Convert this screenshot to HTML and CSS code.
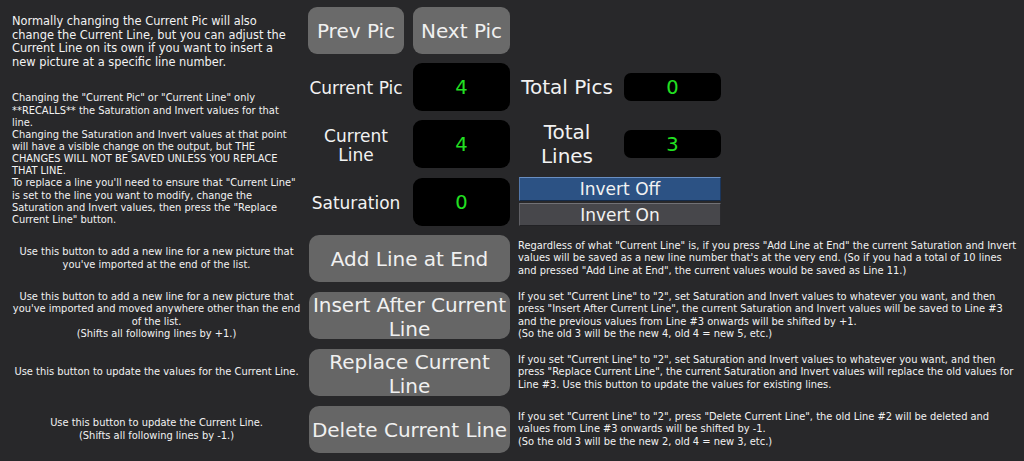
FILE: index.html
```html
<!DOCTYPE html>
<html lang="en">
<head>
<meta charset="utf-8">
<title>Line Editor</title>
<link rel="stylesheet" href="styles.css">
</head>
<body>
<div class="page">
  <section class="top">
    <div class="intro">
      <p class="lead">Normally changing the Current Pic will also<br>change the Current Line, but you can adjust the<br>Current Line on its own if you want to insert a<br>new picture at a specific line number.</p>
      <p class="note">Changing the "Current Pic" or "Current Line" only<br>**RECALLS** the Saturation and Invert values for that<br>line.<br>Changing the Saturation and Invert values at that point<br>will have a visible change on the output, but THE<br>CHANGES WILL NOT BE SAVED UNLESS YOU REPLACE<br>THAT LINE.<br>To replace a line you'll need to ensure that "Current Line"<br>is set to the line you want to modify, change the<br>Saturation and Invert values, then press the "Replace<br>Current Line" button.</p>
    </div>
    <div class="controls">
      <button class="btn nav">Prev Pic</button>
      <button class="btn nav">Next Pic</button>
      <div class="spacer"></div>

      <div class="label">Current Pic</div>
      <div class="display">4</div>
      <div class="label big">Total Pics</div>
      <div class="display slim">0</div>

      <div class="label">Current<br>Line</div>
      <div class="display">4</div>
      <div class="label big">Total<br>Lines</div>
      <div class="display slim">3</div>

      <div class="label">Saturation</div>
      <div class="display">0</div>
      <div class="toggle">
        <button class="tbtn on">Invert Off</button>
        <button class="tbtn off">Invert On</button>
      </div>
    </div>
  </section>

  <section class="actions">
    <p class="hint">Use this button to add a new line for a new picture that<br>you've imported at the end of the list.</p>
    <button class="btn action">Add Line at End</button>
    <p class="detail">Regardless of what "Current Line" is, if you press "Add Line at End" the current Saturation and Invert<br>values will be saved as a new line number that's at the very end. (So if you had a total of 10 lines<br>and pressed "Add Line at End", the current values would be saved as Line 11.)</p>

    <p class="hint">Use this button to add a new line for a new picture that<br>you've imported and moved anywhere other than the end<br>of the list.<br>(Shifts all following lines by +1.)</p>
    <button class="btn action">Insert After Current<br>Line</button>
    <p class="detail">If you set "Current Line" to "2", set Saturation and Invert values to whatever you want, and then<br>press "Insert After Current Line", the current Saturation and Invert values will be saved to Line #3<br>and the previous values from Line #3 onwards will be shifted by +1.<br>(So the old 3 will be the new 4, old 4 = new 5, etc.)</p>

    <p class="hint">Use this button to update the values for the Current Line.</p>
    <button class="btn action">Replace Current<br>Line</button>
    <p class="detail">If you set "Current Line" to "2", set Saturation and Invert values to whatever you want, and then<br>press "Replace Current Line", the current Saturation and Invert values will replace the old values for<br>Line #3. Use this button to update the values for existing lines.</p>

    <p class="hint">Use this button to update the Current Line.<br>(Shifts all following lines by -1.)</p>
    <button class="btn action">Delete Current Line</button>
    <p class="detail">If you set "Current Line" to "2", press "Delete Current Line", the old Line #2 will be deleted and<br>values from Line #3 onwards will be shifted by -1.<br>(So the old 3 will be the new 2, old 4 = new 3, etc.)</p>
  </section>
</div>
</body>
</html>
```

FILE: styles.css
```css
* { box-sizing: border-box; }
html, body {
  margin: 0;
  padding: 0;
  background: #28282a;
}
body {
  width: 1024px;
  height: 461px;
  overflow: hidden;
  color: #f2f2f2;
  font-family: "DejaVu Sans", Verdana, sans-serif;
}
p { margin: 0; }
button {
  font-family: inherit;
  color: inherit;
  border: 0;
  margin: 0;
  padding: 0;
  cursor: pointer;
}
.page {
  padding-top: 7px;
  display: flex;
  flex-direction: column;
  gap: 9px;
}
.top {
  display: grid;
  grid-template-columns: 308px auto;
  height: 219px;
}
.intro {
  padding: 8px 0 0 12px;
}
.lead {
  font-size: 11.4px;
  line-height: 13.6px;
}
.note {
  margin-top: 23px;
  font-size: 9.9px;
  line-height: 12.15px;
}
.controls {
  display: grid;
  grid-template-columns: 96px 97px 96px 97px;
  grid-template-rows: 47px 48px 48px 49px;
  column-gap: 9px;
  row-gap: 9px;
  align-items: center;
}
.spacer { grid-column: 3 / 5; }
.btn {
  background: #6a6a6a;
  border-radius: 9px;
  color: #f0f0f0;
  font-size: 20px;
  line-height: 23.5px;
  height: 100%;
  width: 100%;
  padding-top: 2px;
}
.label {
  font-size: 17px;
  line-height: 19.5px;
  text-align: center;
  padding-top: 4px;
}
.label.big {
  font-size: 20px;
  line-height: 23.5px;
  padding-top: 1px;
}
.display {
  background: #000;
  border-radius: 9px;
  height: 48px;
  color: #22e022;
  font-size: 19.5px;
  display: flex;
  align-items: center;
  justify-content: center;
  padding-top: 1px;
}
.display.slim {
  height: 28px;
  border-radius: 7px;
}
.toggle {
  grid-column: 3 / 5;
  display: flex;
  flex-direction: column;
  gap: 2px;
  height: 100%;
}
.tbtn {
  font-size: 17px;
  line-height: 18px;
  flex: 1;
  width: 100%;
  padding-top: 1px;
}
.tbtn.on {
  background: #2c5284;
  border-top: 1px solid #6a8fc2;
  border-left: 1px solid #5277aa;
  border-right: 1px solid #1b365c;
  border-bottom: 1px solid #142a48;
}
.tbtn.off {
  background: #47474b;
  border-top: 1px solid #717176;
  border-left: 1px solid #606065;
  border-right: 1px solid #2a2a2d;
  border-bottom: 1px solid #222225;
}
.actions {
  display: grid;
  grid-template-columns: 309px 201px 1fr;
  grid-auto-rows: 47px;
  row-gap: 10px;
  align-items: center;
}
.hint {
  font-size: 9.9px;
  line-height: 12.2px;
  text-align: center;
  padding-left: 4px;
}
.detail {
  font-size: 9.9px;
  line-height: 12.25px;
  padding-left: 8px;
  white-space: nowrap;
}
.action {
  border-radius: 10px;
  background: #666666;
}
```
